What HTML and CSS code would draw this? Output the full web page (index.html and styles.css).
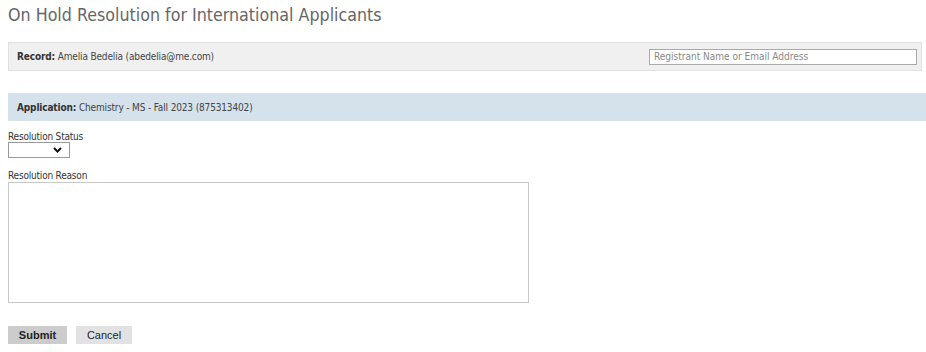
FILE: index.html
```html
<html lang="en">
<head>
    <meta charset="UTF-8">
    <meta name="viewport" content="width=device-width, initial-scale=1.0">
    <title>On Hold Resolution</title>
    <link rel="stylesheet" href="styles.css">
</head>
<body>
    <h1 class="pageTitle">On Hold Resolution for International Applicants</h1>

    <div class="recordBar">
        <p class="barText"><b>Record:</b> Amelia Bedelia (abedelia@me.com)</p>
        <input type="text" class="searchBox" placeholder="Registrant Name or Email Address">
    </div>

    <div class="appBar">
        <p class="barText"><b>Application:</b> Chemistry - MS - Fall 2023 (875313402)</p>
    </div>

    <form class="resolutionForm">
        <label class="fieldLabel" for="status">Resolution Status</label>
        <div class="selectWrap">
            <select id="status" class="statusSelect">
                <option></option>
                <option>Resolved</option>
                <option>Denied</option>
            </select>
            <svg class="chevron" width="9" height="6" viewBox="0 0 9 6">
                <path d="M1 1 L4.5 4.5 L8 1" fill="none" stroke="#111" stroke-width="2"/>
            </svg>
        </div>

        <label class="fieldLabel reasonLabel" for="reason">Resolution Reason</label>
        <textarea id="reason" class="reasonBox"></textarea>

        <div class="buttons">
            <button type="button" class="btn submitBtn">Submit</button>
            <button type="button" class="btn cancelBtn">Cancel</button>
        </div>
    </form>
</body>
</html>
```

FILE: styles.css
```css
body {
  margin: 0;
  padding: 5px 4px 0px 8px;
  background-color: #ffffff;
  font-family: "DejaVu Sans Condensed", "DejaVu Sans", sans-serif;
  color: #333;
  overflow: hidden;
}

p {
  margin: 0;
}

.pageTitle {
  margin: 0;
  font-size: 17.7px;
  font-weight: normal;
  line-height: 20px;
  color: #666;
}

.barText {
  font-size: 10px;
  letter-spacing: -0.15px;
  color: #444;
}

.barText b {
  color: #333;
}

.recordBar {
  display: flex;
  justify-content: space-between;
  align-items: center;
  margin-top: 17px;
  height: 27px;
  padding: 0px 4px 0px 8px;
  background-color: #f0f0f0;
  border: 1px solid #e0e0e0;
}

.searchBox {
  width: 268px;
  height: 16px;
  box-sizing: border-box;
  border: 1px solid #aaa;
  padding: 0px 4px;
  font-family: "DejaVu Sans Condensed", "DejaVu Sans", sans-serif;
  font-size: 10px;
  outline: none;
}

.searchBox::placeholder {
  color: #888;
}

.appBar {
  display: flex;
  align-items: center;
  margin-top: 22px;
  margin-right: -4px;
  height: 28px;
  padding-left: 9px;
  background-color: #d5e2ec;
}

.resolutionForm {
  display: flex;
  flex-direction: column;
  align-items: flex-start;
  padding-top: 11px;
}

.fieldLabel {
  font-size: 10px;
  letter-spacing: -0.2px;
  line-height: 10px;
  color: #333;
}

.selectWrap {
  position: relative;
}

.statusSelect {
  display: block;
  width: 62px;
  height: 16px;
  border: 1px solid #999;
  border-radius: 0;
  background-color: #fff;
  appearance: none;
  -webkit-appearance: none;
  padding: 0;
  font-size: 11px;
}

.chevron {
  position: absolute;
  right: 8px;
  top: 5px;
  pointer-events: none;
}

.reasonLabel {
  margin-top: 13px;
}

.reasonBox {
  display: block;
  width: 521px;
  height: 121px;
  box-sizing: border-box;
  border: 1px solid #c8c8c8;
  resize: none;
  margin-top: 1px;
  outline: none;
}

.buttons {
  display: flex;
  gap: 9px;
  margin-top: 23px;
}

.btn {
  height: 18px;
  border: none;
  border-radius: 0;
  padding: 0;
  font-family: "Liberation Sans", Arial, sans-serif;
  font-size: 11px;
  color: #222;
  cursor: pointer;
}

.submitBtn {
  width: 59px;
  background-color: #cccccc;
  font-weight: bold;
}

.cancelBtn {
  width: 56px;
  background-color: #e2e2e2;
}
```
